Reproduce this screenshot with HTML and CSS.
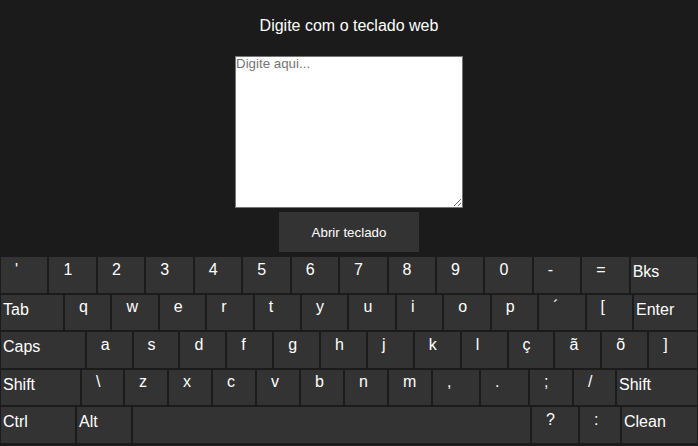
FILE: index.html
```html
<!DOCTYPE html>
<html lang="pt-BR">
<head>
<meta charset="utf-8">
<title>Teclado web</title>
<link rel="stylesheet" href="styles.css">
</head>
<body>
<main class="app">
  <p class="title">Digite com o teclado web</p>
  <textarea class="input" placeholder="Digite aqui..."></textarea>
  <button class="open-btn" type="button">Abrir teclado</button>
  <section class="keyboard">
    <div class="row row-1">
      <div class="key">'</div>
      <div class="key">1</div>
      <div class="key">2</div>
      <div class="key">3</div>
      <div class="key">4</div>
      <div class="key">5</div>
      <div class="key">6</div>
      <div class="key">7</div>
      <div class="key">8</div>
      <div class="key">9</div>
      <div class="key">0</div>
      <div class="key">-</div>
      <div class="key">=</div>
      <div class="key special">Bks</div>
    </div>
    <div class="row row-2">
      <div class="key special">Tab</div>
      <div class="key">q</div>
      <div class="key">w</div>
      <div class="key">e</div>
      <div class="key">r</div>
      <div class="key">t</div>
      <div class="key">y</div>
      <div class="key">u</div>
      <div class="key">i</div>
      <div class="key">o</div>
      <div class="key">p</div>
      <div class="key">´</div>
      <div class="key">[</div>
      <div class="key special">Enter</div>
    </div>
    <div class="row row-3">
      <div class="key special">Caps</div>
      <div class="key">a</div>
      <div class="key">s</div>
      <div class="key">d</div>
      <div class="key">f</div>
      <div class="key">g</div>
      <div class="key">h</div>
      <div class="key">j</div>
      <div class="key">k</div>
      <div class="key">l</div>
      <div class="key">ç</div>
      <div class="key">ã</div>
      <div class="key">õ</div>
      <div class="key">]</div>
    </div>
    <div class="row row-4">
      <div class="key special">Shift</div>
      <div class="key">\</div>
      <div class="key">z</div>
      <div class="key">x</div>
      <div class="key">c</div>
      <div class="key">v</div>
      <div class="key">b</div>
      <div class="key">n</div>
      <div class="key">m</div>
      <div class="key">,</div>
      <div class="key">.</div>
      <div class="key">;</div>
      <div class="key">/</div>
      <div class="key special">Shift</div>
    </div>
    <div class="row row-5">
      <div class="key special">Ctrl</div>
      <div class="key special">Alt</div>
      <div class="key space"></div>
      <div class="key">?</div>
      <div class="key">:</div>
      <div class="key special">Clean</div>
    </div>
  </section>
</main>
</body>
</html>
```

FILE: styles.css
```css
html, body {
  margin: 0;
  padding: 0;
  background: #1b1b1b;
  height: 100%;
  overflow: hidden;
}

body {
  font-family: "Liberation Sans", Arial, sans-serif;
  color: #ffffff;
}

.app {
  display: flex;
  flex-direction: column;
  align-items: center;
}

.title {
  margin: 17px 0 0;
  font-size: 16px;
  line-height: 18px;
  color: #ffffff;
}

.input {
  box-sizing: border-box;
  margin-top: 21px;
  width: 228px;
  height: 152px;
  padding: 0;
  border: 1px solid #767676;
  background: #ffffff;
  color: #000000;
  font-family: "Liberation Sans", Arial, sans-serif;
  font-size: 13.33px;
  line-height: 1;
}

.input::placeholder {
  color: #757575;
}

.open-btn {
  margin-top: 4px;
  width: 140px;
  height: 40px;
  border: none;
  background: #333333;
  color: #ffffff;
  font-family: "Liberation Sans", Arial, sans-serif;
  font-size: 13.33px;
  padding: 0;
}

.keyboard {
  margin-top: 4px;
  align-self: stretch;
  height: 188px;
  display: flex;
  flex-direction: column;
}

.row {
  flex: 1;
  display: grid;
  column-gap: 2px;
  padding: 1px;
  min-height: 0;
}

.row-1 { grid-template-columns: repeat(13, 46.44fr) 66.3fr; }
.row-2 { grid-template-columns: 62fr repeat(12, 45.4fr) 63fr; }
.row-3 { grid-template-columns: 84fr repeat(12, 45fr) 48fr; }
.row-4 { grid-template-columns: 79fr 41fr repeat(7, 42fr) 46fr 47fr 42fr 41fr 80fr; }
.row-5 { grid-template-columns: 74fr 54fr 397fr 46fr 40fr 75fr; }

.key {
  min-width: 0;
  background: #333333;
  color: #ffffff;
  font-size: 16px;
  line-height: normal;
  padding: 3.5px 0 0 14px;
  box-sizing: border-box;
  white-space: nowrap;
  overflow: hidden;
}

.key.special {
  padding: 6px 0 0 2px;
}

.key.space {
  padding: 0;
}
```
